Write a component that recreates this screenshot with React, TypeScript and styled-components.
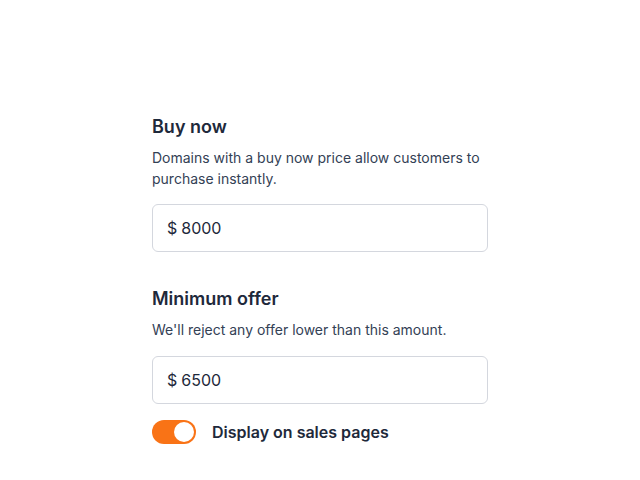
import React, { useState } from "react";
import styled, { createGlobalStyle } from "styled-components";

const Global = createGlobalStyle`
  html, body { margin: 0; padding: 0; background: #ffffff; }
  body { font-family: Inter, "Noto Sans", sans-serif; color: #1f2937; }
  * { box-sizing: border-box; }
`;

const Page = styled.main`
  display: flex;
  justify-content: center;
  padding-top: 113px;
`;

const Form = styled.div`
  width: 336px;
  display: flex;
  flex-direction: column;
`;

const Section = styled.section<{ $last?: boolean }>`
  display: flex;
  flex-direction: column;
  margin-bottom: ${(p) => (p.$last ? "16px" : "33px")};
`;

const Heading = styled.h2`
  margin: 0;
  font-size: 18px;
  line-height: 28px;
  font-weight: 600;
  color: #1e293b;
`;

const Description = styled.p<{ $after?: number }>`
  margin: 6px 0 ${(p) => p.$after ?? 15}px;
  font-size: 14px;
  line-height: 21px;
  color: #334155;
`;

const InputBox = styled.label`
  display: flex;
  align-items: center;
  height: 48px;
  padding: 0 14px;
  border: 1px solid #d4d7de;
  border-radius: 6px;
  font-size: 16px;
  color: #1e293b;
  gap: 4px;
`;

const Prefix = styled.span`
  color: #1e293b;
`;

const Field = styled.input`
  border: none;
  outline: none;
  padding: 0;
  flex: 1;
  font: inherit;
  color: inherit;
  background: transparent;
`;

const ToggleRow = styled.div`
  display: flex;
  align-items: center;
  gap: 16px;
`;

const Switch = styled.button<{ $on: boolean }>`
  position: relative;
  width: 44px;
  height: 24px;
  border-radius: 12px;
  border: none;
  padding: 0;
  background: ${(p) => (p.$on ? "#f97316" : "#d1d5db")};
  cursor: pointer;
`;

const Thumb = styled.span<{ $on: boolean }>`
  position: absolute;
  top: 2px;
  left: ${(p) => (p.$on ? "22px" : "2px")};
  width: 20px;
  height: 20px;
  border-radius: 50%;
  background: #ffffff;
`;

const ToggleLabel = styled.span`
  font-size: 16px;
  font-weight: 600;
  color: #1e293b;
`;

export default function App() {
  const [on, setOn] = useState(true);
  return (
    <>
      <Global />
      <Page>
        <Form>
          <Section>
            <Heading>Buy now</Heading>
            <Description>
              Domains with a buy now price allow customers to purchase instantly.
            </Description>
            <InputBox>
              <Prefix>$</Prefix>
              <Field defaultValue="8000" />
            </InputBox>
          </Section>
          <Section $last>
            <Heading>Minimum offer</Heading>
            <Description $after={16}>
              We'll reject any offer lower than this amount.
            </Description>
            <InputBox>
              <Prefix>$</Prefix>
              <Field defaultValue="6500" />
            </InputBox>
          </Section>
          <ToggleRow>
            <Switch $on={on} onClick={() => setOn(!on)} aria-pressed={on}>
              <Thumb $on={on} />
            </Switch>
            <ToggleLabel>Display on sales pages</ToggleLabel>
          </ToggleRow>
        </Form>
      </Page>
    </>
  );
}
